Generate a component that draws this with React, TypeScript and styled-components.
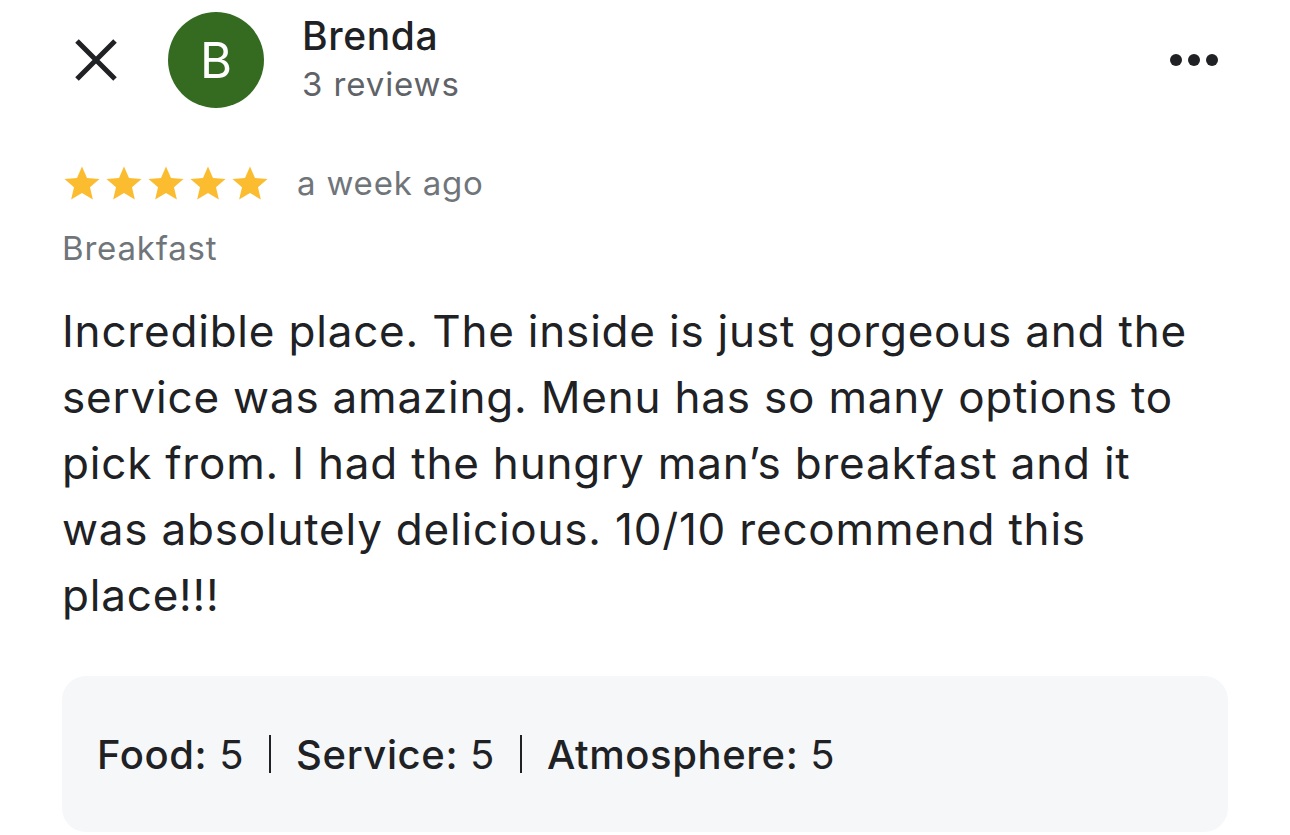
import React from "react";
import styled, { createGlobalStyle } from "styled-components";

const GlobalStyle = createGlobalStyle`
  html, body {
    margin: 0;
    padding: 0;
    background: #fff;
  }
  body {
    font-family: Inter, Roboto, "Liberation Sans", sans-serif;
    color: #202124;
  }
`;

const Page = styled.div`
  width: 1290px;
  height: 835px;
  overflow: hidden;
  padding: 12px 62px 0 62px;
  box-sizing: border-box;
`;

const Header = styled.div`
  display: flex;
  align-items: center;
  height: 96px;
`;

const CloseButton = styled.button`
  width: 56px;
  height: 56px;
  margin-left: 6px;
  padding: 0;
  border: none;
  background: none;
  display: flex;
  align-items: center;
  justify-content: center;
  color: #202124;
`;

const Avatar = styled.div`
  width: 96px;
  height: 96px;
  border-radius: 50%;
  background: #356b21;
  color: #fff;
  font-size: 49px;
  font-weight: 400;
  display: flex;
  align-items: center;
  justify-content: center;
  margin-left: 44px;
`;

const Who = styled.div`
  display: flex;
  flex-direction: column;
  margin-left: 38px;
  flex: 1;
`;

const Name = styled.div`
  font-size: 39px;
  font-weight: 500;
  line-height: 44px;
  letter-spacing: 0.6px;
  color: #202124;
`;

const Sub = styled.div`
  font-size: 33px;
  line-height: 44px;
  margin-top: 4px;
  letter-spacing: 0.9px;
  color: #5f6368;
`;

const More = styled.div`
  display: flex;
  gap: 6px;
  margin-right: 10px;
`;

const Dot = styled.span`
  width: 12px;
  height: 12px;
  border-radius: 50%;
  background: #202124;
`;

const RatingRow = styled.div`
  display: flex;
  align-items: center;
  margin-top: 54px;
  gap: 26px;
`;

const Stars = styled.div`
  display: flex;
  margin-left: -1px;
`;

const Meta = styled.span`
  font-size: 33px;
  letter-spacing: 0.8px;
  color: #70757a;
`;

const Tag = styled.div`
  font-size: 33px;
  letter-spacing: 0.8px;
  color: #70757a;
  margin-top: 24px;
`;

const Body = styled.p`
  font-size: 44px;
  line-height: 66px;
  letter-spacing: 0.8px;
  color: #202124;
  margin: 30px 0 0 0;
  width: 1166px;
`;

const Summary = styled.div`
  margin-top: 48px;
  background: #f6f7f9;
  border-radius: 24px;
  height: 156px;
  padding: 0 35px;
  display: flex;
  align-items: center;
  font-size: 40px;
  letter-spacing: 0.6px;
`;

const Label = styled.span`
  font-weight: 500;
`;

const Sep = styled.span`
  display: inline-block;
  width: 2px;
  height: 38px;
  background: #202124;
  margin: 0 25px;
`;

const Star = () => (
  <svg width="42" height="42" viewBox="0 0 24 24">
    <path
      fill="#fbbc2f"
      d="M12 2.5l2.85 6.6 7.15.62-5.43 4.7 1.63 7.01L12 17.7l-6.2 3.73 1.63-7.01L2 9.72l7.15-.62z"
    />
  </svg>
);

const ratings = [
  { label: "Food", value: 5 },
  { label: "Service", value: 5 },
  { label: "Atmosphere", value: 5 },
];

export default function App() {
  return (
    <>
      <GlobalStyle />
      <Page>
        <Header>
          <CloseButton>
            <svg width="44" height="44" viewBox="0 0 44 44">
              <path d="M3 3L41 41M41 3L3 41" stroke="#202124" strokeWidth="5" />
            </svg>
          </CloseButton>
          <Avatar>B</Avatar>
          <Who>
            <Name>Brenda</Name>
            <Sub>3 reviews</Sub>
          </Who>
          <More>
            <Dot />
            <Dot />
            <Dot />
          </More>
        </Header>
        <RatingRow>
          <Stars>
            {[0, 1, 2, 3, 4].map((i) => (
              <Star key={i} />
            ))}
          </Stars>
          <Meta>a week ago</Meta>
        </RatingRow>
        <Tag>Breakfast</Tag>
        <Body>
          Incredible place. The inside is just gorgeous and the service was
          amazing. Menu has so many options to pick from. I had the hungry
          man’s breakfast and it was absolutely delicious. 10/10 recommend
          this place!!!
        </Body>
        <Summary>
          {ratings.map((r, i) => (
            <React.Fragment key={r.label}>
              {i > 0 && <Sep />}
              <span>
                <Label>{r.label}:</Label> {r.value}
              </span>
            </React.Fragment>
          ))}
        </Summary>
      </Page>
    </>
  );
}
